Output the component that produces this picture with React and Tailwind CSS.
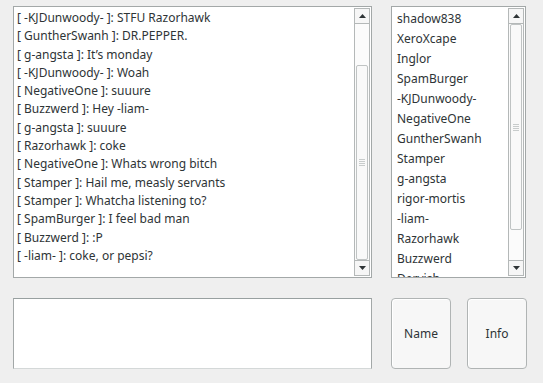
import React from "react";

const messages = [
  "[ -KJDunwoody- ]: STFU Razorhawk",
  "[ GuntherSwanh ]: DR.PEPPER.",
  "[ g-angsta ]: It\u2019s monday",
  "[ -KJDunwoody- ]: Woah",
  "[ NegativeOne ]: suuure",
  "[ Buzzwerd ]: Hey -liam-",
  "[ g-angsta ]: suuure",
  "[ Razorhawk ]: coke",
  "[ NegativeOne ]: Whats wrong bitch",
  "[ Stamper ]: Hail me, measly servants",
  "[ Stamper ]: Whatcha listening to?",
  "[ SpamBurger ]: I feel bad man",
  "[ Buzzwerd ]: :P",
  "[ -liam- ]: coke, or pepsi?",
];

const users = [
  "shadow838",
  "XeroXcape",
  "Inglor",
  "SpamBurger",
  "-KJDunwoody-",
  "NegativeOne",
  "GuntherSwanh",
  "Stamper",
  "g-angsta",
  "rigor-mortis",
  "-liam-",
  "Razorhawk",
  "Buzzwerd",
  "Dervish",
];

const Arrow = ({ up }) => (
  <svg width="7" height="4" viewBox="0 0 7 4" className="block">
    {up ? <path d="M0 4 L3.5 0 L7 4 Z" fill="#2e3436" /> : <path d="M0 0 L7 0 L3.5 4 Z" fill="#2e3436" />}
  </svg>
);

const Scrollbar = ({ thumbTop, thumbBottom }) => (
  <div className="w-[16px] h-full flex flex-col">
    <div className="h-[16px] border border-[#b4b8b8] bg-[#f6f6f6] flex items-center justify-center">
      <Arrow up />
    </div>
    <div className="flex-1 relative border-x border-[#b4b8b8] bg-[#fbfbfb]">
      <div
        className="absolute left-[1px] right-[1px] rounded-[2px] border border-[#bfc3c3] bg-[#f9f9f9] flex items-center justify-center"
        style={{ top: thumbTop, bottom: thumbBottom }}
      >
        <div className="flex flex-col gap-[1px]">
          <div className="w-[6px] h-[1px] bg-[#c8cccc]" />
          <div className="w-[6px] h-[1px] bg-[#c8cccc]" />
          <div className="w-[6px] h-[1px] bg-[#c8cccc]" />
          <div className="w-[6px] h-[1px] bg-[#c8cccc]" />
        </div>
      </div>
    </div>
    <div className="h-[16px] border border-[#b4b8b8] bg-[#f6f6f6] flex items-center justify-center">
      <Arrow />
    </div>
  </div>
);

export default function App() {
  return (
    <div
      className="w-[543px] h-[383px] bg-[#efefef] text-[#2e3436] overflow-hidden"
      style={{ fontFamily: '"Noto Sans", "Open Sans", sans-serif' }}
    >
      <div className="flex pt-[6px] pl-[13px] gap-[19px]">
        <div className="w-[359px] h-[272px] bg-white border border-[#a3a8a8] flex">
          <div className="flex-1 pl-[3px] pt-[2px] text-[12px] leading-[18.3px] overflow-hidden">
            {messages.map((m, i) => (
              <div key={i} className="whitespace-nowrap">{m}</div>
            ))}
          </div>
          <div className="pr-[1px] py-[1px]">
            <Scrollbar thumbTop={41} thumbBottom={0} />
          </div>
        </div>
        <div className="w-[135px] h-[272px] bg-white border border-[#a3a8a8] flex">
          <div className="flex-1 pl-[5px] pt-[2px] text-[12px] leading-[20px] overflow-hidden">
            {users.map((u) => (
              <div key={u} className="whitespace-nowrap">{u}</div>
            ))}
          </div>
          <div className="pr-[1px] py-[1px]">
            <Scrollbar thumbTop={0} thumbBottom={30} />
          </div>
        </div>
      </div>
      <div className="flex pl-[13px] pt-[20px] items-start">
        <div className="w-[359px] h-[71px] bg-white border border-[#a3a8a8] border-t-[#98a0a0] border-b-[#d4d8d8]" />
        <button className="ml-[19px] w-[60px] h-[71px] rounded-[4px] border border-[#b0b4b4] bg-[#f7f7f7] text-[12px] text-[#2e3436] shadow-[inset_1px_1px_0_#ffffff]">
          Name
        </button>
        <button className="ml-[16px] w-[60px] h-[71px] rounded-[4px] border border-[#b0b4b4] bg-[#f7f7f7] text-[12px] text-[#2e3436] shadow-[inset_1px_1px_0_#ffffff]">
          Info
        </button>
      </div>
    </div>
  );
}
